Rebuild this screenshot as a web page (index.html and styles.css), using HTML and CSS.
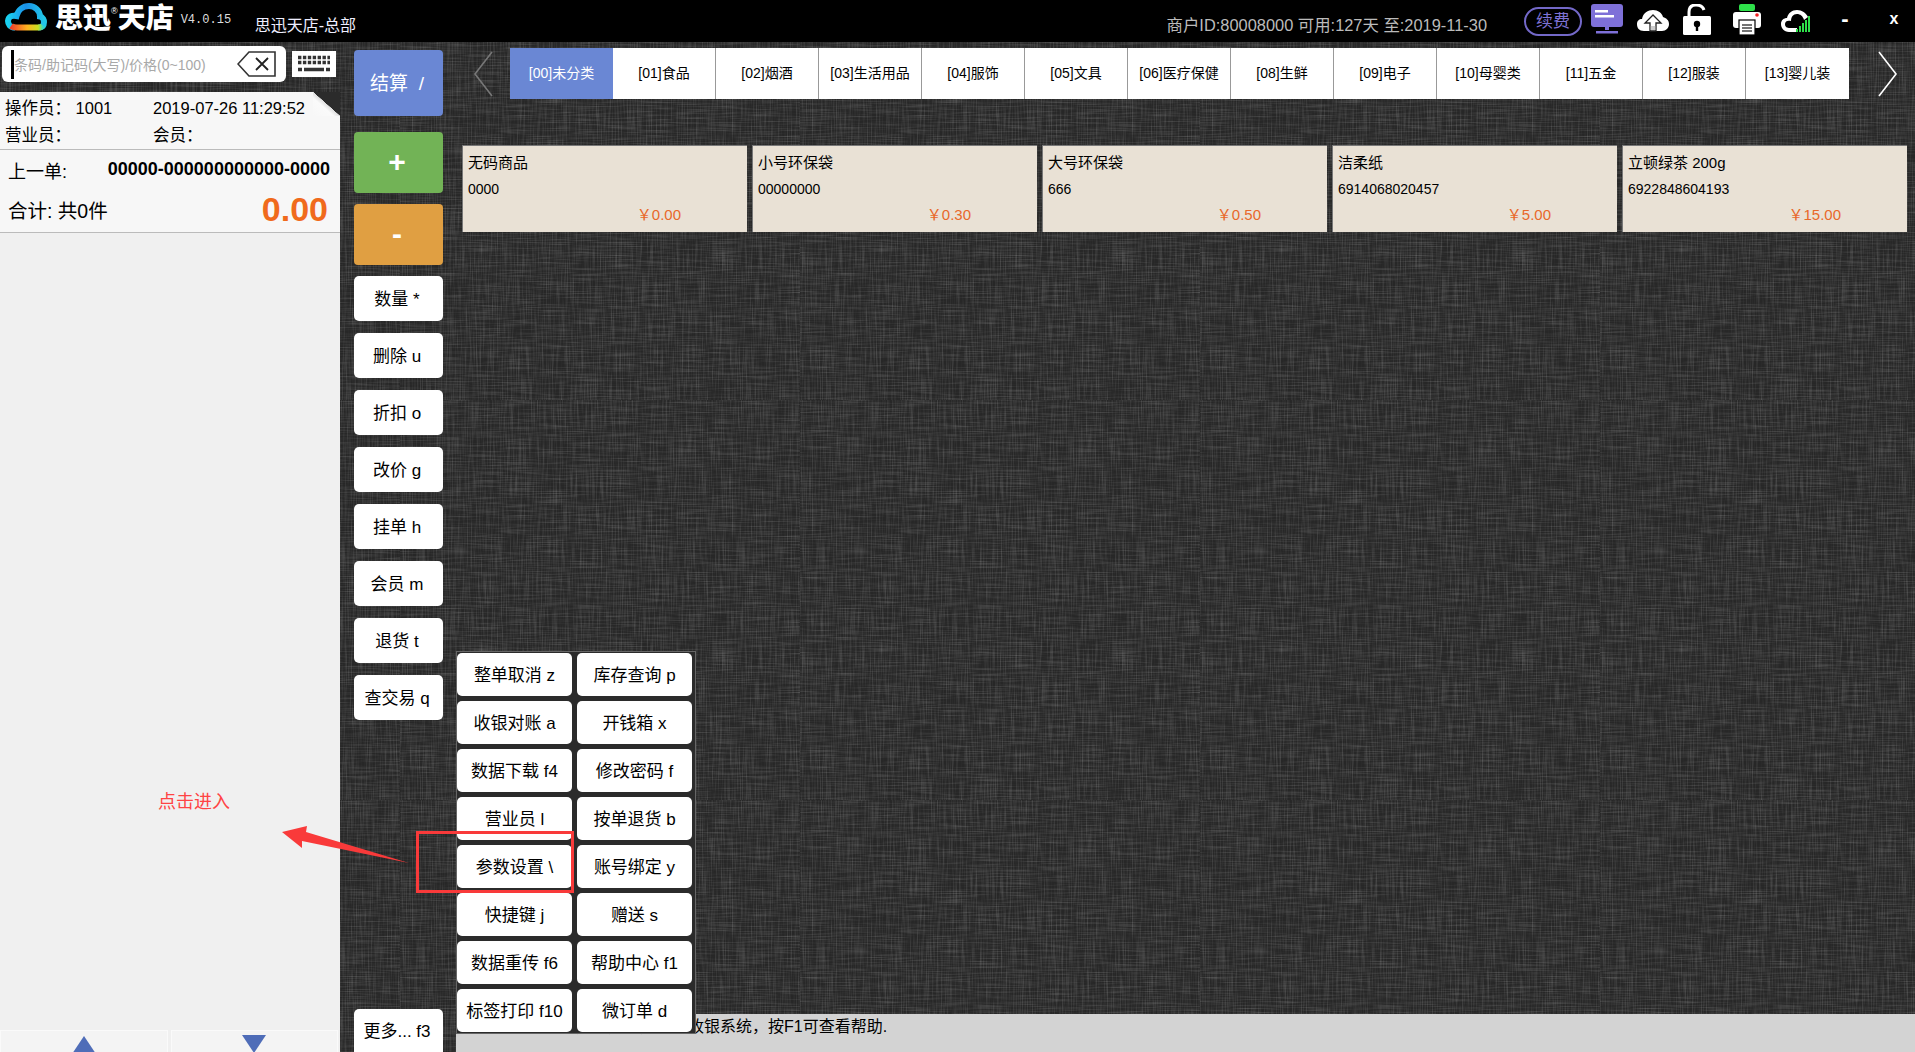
FILE: index.html
```html
<!DOCTYPE html>
<html lang="zh-CN">
<head>
    <meta charset="UTF-8">
    <meta name="viewport" content="width=device-width, initial-scale=1.0">
    <title>思迅天店</title>
    <link rel="stylesheet" href="styles.css">
</head>
<body>

<header class="topbar">
    <svg class="logo-cloud" viewBox="0 0 42 28" width="42" height="28">
        <defs>
            <linearGradient id="cloudTop" x1="0" y1="0" x2="1" y2="0">
                <stop offset="0" stop-color="#19d0f0"/>
                <stop offset="0.5" stop-color="#1a8fe8"/>
                <stop offset="1" stop-color="#22c8e8"/>
            </linearGradient>
            <linearGradient id="cloudBottom" x1="0" y1="0" x2="1" y2="0">
                <stop offset="0" stop-color="#f0402a"/>
                <stop offset="0.5" stop-color="#ffb21f"/>
                <stop offset="0.85" stop-color="#c8e020"/>
                <stop offset="1" stop-color="#30d8c8"/>
            </linearGradient>
        </defs>
        <path d="M10 24.5C5 24.5 3 21 3 18C3.5 13.5 7 12 11.5 13C13 7 18 3 24 3C30 3 35 8 35 13.5C38 14 39 17 39 19C39 23 37 24.5 33 24.5" fill="none" stroke="url(#cloudTop)" stroke-width="6"/>
        <path d="M6 23C8 24.5 10 24.5 12 24.5H33C35 24.5 37 24 38 22.5" fill="none" stroke="url(#cloudBottom)" stroke-width="6"/>
    </svg>
    <span class="logo-text">思迅<sup class="logo-reg">®</sup>天店</span>
    <span class="version">V4.0.15</span>
    <span class="shop-name">思迅天店-总部</span>

    <span class="merchant">商户ID:80008000 可用:127天 至:2019-11-30</span>
    <span class="renew">续费</span>

    <svg class="tool-icon icon-monitor" viewBox="0 0 32 30" width="32" height="30">
        <rect x="0" y="0" width="32" height="23" rx="3" fill="#7e70d8"/>
        <rect x="4" y="6" width="13" height="2.5" fill="#fff"/>
        <rect x="4" y="11" width="19" height="2.5" fill="#fff"/>
        <rect x="14" y="23" width="4" height="3" fill="#7e70d8"/>
        <rect x="5" y="27" width="22" height="2.5" fill="#7e70d8"/>
    </svg>
    <svg class="tool-icon icon-upload" viewBox="0 0 32 24" width="32" height="24">
        <path d="M7 22C2 22 0 19 0 15C0 12 2 10 5 10C6 4 11 1 16 1C21 1 25 4 26 8C29 9 32 11 32 15C32 19 29 22 25 22Z" fill="#fff"/>
        <path d="M16 6L8 14H13V22H19V14H24Z" fill="#fff" stroke="#222" stroke-width="1.3"/>
        <path d="M13 18H19M13 20H19" stroke="#999" stroke-width="1"/>
    </svg>
    <svg class="tool-icon icon-lock" viewBox="0 0 28 31" width="28" height="31">
        <path d="M6 14V8C6 3 9 1 13 1C17 1 20 3 21 6" fill="none" stroke="#fff" stroke-width="3"/>
        <rect x="0" y="12" width="28" height="19" rx="1.5" fill="#fff"/>
        <circle cx="14" cy="20" r="3.2" fill="#000"/>
        <rect x="12.8" y="21" width="2.4" height="6" fill="#000"/>
    </svg>
    <svg class="tool-icon icon-printer" viewBox="0 0 28 31" width="28" height="31">
        <rect x="6" y="0" width="16" height="7" rx="2" fill="#2ee04a"/>
        <rect x="0" y="8" width="28" height="16" rx="3" fill="#fff"/>
        <circle cx="24" cy="11" r="1.8" fill="#f02020"/>
        <rect x="6" y="16" width="16" height="15" fill="#fff" stroke="#000" stroke-width="1.2"/>
        <path d="M9 21H19M9 24H19M9 27H19" stroke="#444" stroke-width="1.6"/>
    </svg>
    <svg class="tool-icon icon-signal" viewBox="0 0 32 24" width="32" height="24">
        <path d="M16 23H8C3 23 0 19 0 15C0 11 3 9 6 9C7 4 11 1 16 1C21 1 25 4 27 8L23 11C22 7 19 5 16 5C12 5 10 8 10 12C7 11 4 12 4 15C4 18 6 19 9 19H16Z" fill="#fff"/>
        <path d="M16 23V20M19 23V17M22 23V14M25 23V11M28 23V7" stroke="#2ee04a" stroke-width="2"/>
    </svg>
    <span class="win-btn win-min">-</span>
    <span class="win-btn win-close">x</span>
</header>

<div class="main">
    <aside class="left-panel">
        <div class="search-row">
            <div class="search-box">
                <span class="caret"></span>
                <span class="placeholder">条码/助记码(大写)/价格(0~100)</span>
                <svg class="backspace" viewBox="0 0 40 26" width="40" height="26">
                    <path d="M12 1H38V25H12L1 13Z" fill="#fff" stroke="#333" stroke-width="1.6"/>
                    <path d="M19 7L31 19M31 7L19 19" stroke="#222" stroke-width="1.8"/>
                </svg>
            </div>
            <div class="keyboard">
                <svg viewBox="0 0 34 18" width="34" height="18">
                    <path d="M1 2.5H33M1 7.5H33" stroke="#333" stroke-width="3.4" stroke-dasharray="3.4 1.5"/>
                    <path d="M1 14.5H5M7 14.5H27M29 14.5H33" stroke="#333" stroke-width="3.6"/>
                </svg>
            </div>
        </div>

        <div class="paper">
            <div class="corner"></div>
            <div class="info-block">
                <div class="info-row">
                    <span class="info-a">操作员： 1001</span>
                    <span>2019-07-26 11:29:52</span>
                </div>
                <div class="info-row">
                    <span class="info-a">营业员：</span>
                    <span>会员：</span>
                </div>
            </div>
            <div class="total-block">
                <div class="last-order">
                    <span class="last-label">上一单:</span>
                    <b class="last-no">00000-000000000000-0000</b>
                </div>
                <div class="total-row">
                    <span class="total-label">合计: 共0件</span>
                    <b class="total-num">0.00</b>
                </div>
            </div>
            <div class="list-area"></div>
            <div class="pager">
                <div class="pager-btn"><span class="tri-up"></span></div>
                <div class="pager-btn"><span class="tri-down"></span></div>
            </div>
        </div>
    </aside>

    <nav class="action-col">
        <button class="act act-pay">结算&nbsp; /</button>
        <button class="act act-plus">+</button>
        <button class="act act-minus">-</button>
        <button class="act">数量 *</button>
        <button class="act">删除 u</button>
        <button class="act">折扣 o</button>
        <button class="act">改价 g</button>
        <button class="act">挂单 h</button>
        <button class="act">会员 m</button>
        <button class="act">退货 t</button>
        <button class="act">查交易 q</button>
        <button class="act act-more">更多... f3</button>
    </nav>

    <section class="content">
        <div class="cat-row">
            <svg class="cat-arrow" viewBox="0 0 20 48" width="20" height="48">
                <path d="M18 2L1 24L18 46" fill="none" stroke="#777" stroke-width="1.6"/>
            </svg>
            <div class="tabs">
                <div class="tab active">[00]未分类</div>
                <div class="tab">[01]食品</div>
                <div class="tab">[02]烟酒</div>
                <div class="tab">[03]生活用品</div>
                <div class="tab">[04]服饰</div>
                <div class="tab">[05]文具</div>
                <div class="tab">[06]医疗保健</div>
                <div class="tab">[08]生鲜</div>
                <div class="tab">[09]电子</div>
                <div class="tab">[10]母婴类</div>
                <div class="tab">[11]五金</div>
                <div class="tab">[12]服装</div>
                <div class="tab">[13]婴儿装</div>
            </div>
            <svg class="cat-arrow" viewBox="0 0 20 48" width="20" height="48">
                <path d="M1 2L18 24L1 46" fill="none" stroke="#fff" stroke-width="1.6"/>
            </svg>
        </div>

        <div class="cards">
            <div class="card">
                <div class="card-name">无码商品</div>
                <div class="card-code">0000</div>
                <div class="card-price">￥0.00</div>
            </div>
            <div class="card">
                <div class="card-name">小号环保袋</div>
                <div class="card-code">00000000</div>
                <div class="card-price">￥0.30</div>
            </div>
            <div class="card">
                <div class="card-name">大号环保袋</div>
                <div class="card-code">666</div>
                <div class="card-price">￥0.50</div>
            </div>
            <div class="card">
                <div class="card-name">洁柔纸</div>
                <div class="card-code">6914068020457</div>
                <div class="card-price">￥5.00</div>
            </div>
            <div class="card">
                <div class="card-name">立顿绿茶 200g</div>
                <div class="card-code">6922848604193</div>
                <div class="card-price">￥15.00</div>
            </div>
        </div>

        <div class="status-bar">欢迎使用思迅天店收银系统，按F1可查看帮助.</div>
    </section>
</div>

<!-- more menu, opened over the page -->
<div class="more-menu">
    <button class="more-btn">整单取消 z</button>
    <button class="more-btn">库存查询 p</button>
    <button class="more-btn">收银对账 a</button>
    <button class="more-btn">开钱箱 x</button>
    <button class="more-btn">数据下载 f4</button>
    <button class="more-btn">修改密码 f</button>
    <button class="more-btn">营业员 l</button>
    <button class="more-btn">按单退货 b</button>
    <button class="more-btn">参数设置 \</button>
    <button class="more-btn">账号绑定 y</button>
    <button class="more-btn">快捷键 j</button>
    <button class="more-btn">赠送 s</button>
    <button class="more-btn">数据重传 f6</button>
    <button class="more-btn">帮助中心 f1</button>
    <button class="more-btn">标签打印 f10</button>
    <button class="more-btn">微订单 d</button>
</div>

<!-- red annotation drawn on top of the screenshot -->
<div class="mark-box"></div>
<svg class="mark-arrow" viewBox="0 0 130 40" width="130" height="40">
    <path d="M0 7L25 1L24 7L127 38L20 16L20 23Z" fill="#f93a3a"/>
</svg>
<span class="mark-text">点击进入</span>

</body>
</html>
```

FILE: styles.css
```css
* {
    box-sizing: border-box;
}

html,
body {
    margin: 0;
    height: 100%;
    overflow: hidden;
}

body {
    position: relative;
    display: flex;
    flex-direction: column;
    font-family: "Liberation Sans", "Noto Sans CJK SC", sans-serif;
    color: #000;
    background-color: #272727;
    /* linen look, svg noise only */
    background-image: url("data:image/svg+xml,%3Csvg xmlns='http://www.w3.org/2000/svg' width='400' height='400'%3E%3Cfilter id='a'%3E%3CfeTurbulence type='fractalNoise' baseFrequency='0.03 0.8' numOctaves='2' stitchTiles='stitch'/%3E%3CfeColorMatrix values='0 0 0 0 1 0 0 0 0 1 0 0 0 0 1 0 0 0 0.3 -0.125'/%3E%3C/filter%3E%3Cfilter id='b'%3E%3CfeTurbulence type='fractalNoise' baseFrequency='0.8 0.03' numOctaves='2' stitchTiles='stitch'/%3E%3CfeColorMatrix values='0 0 0 0 1 0 0 0 0 1 0 0 0 0 1 0 0 0 0.3 -0.125'/%3E%3C/filter%3E%3Crect width='400' height='400' filter='url(%23a)'/%3E%3Crect width='400' height='400' filter='url(%23b)'/%3E%3C/svg%3E");
}

button {
    font-family: inherit;
    color: #000;
    border: none;
    padding: 0 0 2px;
}

/* top bar */
.topbar {
    height: 42px;
    flex: none;
    display: flex;
    align-items: center;
    background: #000;
    color: #fff;
    padding-left: 5px;
}

.logo-cloud {
    flex: none;
    margin-top: -8px;
}

.logo-text {
    margin-left: 8px;
    font-size: 28px;
    font-weight: 900;
    line-height: 30px;
    margin-top: -4px;
    white-space: nowrap;
}

.logo-reg {
    font-size: 9px;
    font-weight: 400;
    vertical-align: 14px;
    line-height: 0;
}

.version {
    margin-left: 7px;
    font-family: "Liberation Mono", monospace;
    font-size: 12px;
    color: #ddd;
    margin-top: -2px;
    width: 74px;
}

.shop-name {
    font-size: 16px;
    margin-top: 5px;
    color: #eef;
}

.merchant {
    margin-left: auto;
    font-size: 16.4px;
    color: #bbb;
    margin-top: 5px;
    white-space: nowrap;
}

.renew {
    margin-left: 37px;
    width: 58px;
    height: 29px;
    border: 2px solid #7368c8;
    border-radius: 15px;
    color: #7e72d4;
    font-size: 17px;
    line-height: 25px;
    text-align: center;
}

.tool-icon {
    flex: none;
}

.icon-monitor {
    margin-left: 9px;
    margin-top: -4px;
}

.icon-upload {
    margin-left: 14px;
}

.icon-lock {
    margin-left: 14px;
    margin-top: -4px;
}

.icon-printer {
    margin-left: 22px;
    margin-top: -3px;
}

.icon-signal {
    margin-left: 20px;
}

.win-btn {
    font-weight: 700;
    text-align: center;
    margin-top: -4px;
}

.win-min {
    margin-left: 28px;
    width: 8px;
    font-size: 22px;
}

.win-close {
    margin-left: 40px;
    margin-right: 16px;
    width: 10px;
    font-size: 16px;
}

/* layout */
.main {
    flex: 1;
    display: flex;
    min-height: 0;
}

/* left panel */
.left-panel {
    width: 340px;
    flex: none;
    display: flex;
    flex-direction: column;
}

.search-row {
    height: 50px;
    flex: none;
    display: flex;
    padding: 4px 0 0 2px;
}

.search-box {
    width: 284px;
    height: 36px;
    background: #fff;
    border-radius: 6px;
    display: flex;
    align-items: center;
    padding-left: 9px;
}

.caret {
    width: 3px;
    height: 29px;
    background: #000;
    flex: none;
}

.placeholder {
    font-size: 14px;
    color: #a8a8a8;
    white-space: nowrap;
    width: 223px;
    flex: none;
}

.backspace {
    flex: none;
}

.keyboard {
    margin: 5px 0 0 6px;
    width: 44px;
    height: 26px;
    background: #fff;
    display: flex;
    align-items: center;
    justify-content: center;
}

.paper {
    position: relative;
    flex: 1;
    display: flex;
    flex-direction: column;
    background: #f0f0f0;
    min-height: 0;
}

.corner {
    position: absolute;
    top: 0;
    right: 0;
    width: 27px;
    height: 24px;
    background: linear-gradient(to bottom left, #2b2b2b 0 49%, #dedede 50%, #fafafa 62%, #f7f7f7 100%);
}

.info-block {
    height: 58px;
    flex: none;
    padding: 3px 0 0 5px;
    background: #f7f7f7;
    border-bottom: 1px solid #bbb;
    font-size: 16.5px;
}

.info-row {
    display: flex;
    height: 27px;
    line-height: 27px;
}

.info-a {
    width: 148px;
    flex: none;
}

.total-block {
    height: 83px;
    flex: none;
    background: #f7f7f7;
    border-bottom: 1px solid #bbb;
    padding: 0 10px 0 8px;
}

.last-order {
    display: flex;
    align-items: center;
    justify-content: space-between;
    height: 39px;
}

.last-label {
    font-size: 18px;
}

.last-no {
    font-size: 18px;
}

.total-row {
    display: flex;
    align-items: center;
    justify-content: space-between;
    height: 41px;
}

.total-label {
    font-size: 19.5px;
}

.total-num {
    font-size: 34px;
    color: #f06a1c;
    margin-right: 2px;
}

.list-area {
    flex: 1;
}

.pager {
    height: 22px;
    flex: none;
    display: flex;
    gap: 3px;
    padding-right: 2px;
}

.pager-btn {
    flex: 1;
    display: flex;
    justify-content: center;
    padding-top: 5px;
    background: #f4f4f4;
    border: 1px solid #fafafa;
    border-bottom: none;
    overflow: hidden;
}

.tri-up {
    width: 0;
    height: 0;
    border-left: 12px solid transparent;
    border-right: 12px solid transparent;
    border-bottom: 18px solid #4f6db8;
}

.tri-down {
    width: 0;
    height: 0;
    margin-top: -1px;
    border-left: 12px solid transparent;
    border-right: 12px solid transparent;
    border-top: 18px solid #4f6db8;
}

/* middle buttons */
.action-col {
    width: 89px;
    flex: none;
    margin-left: 14px;
    padding-top: 8px;
    display: flex;
    flex-direction: column;
    gap: 12px;
}

.act {
    height: 45px;
    flex: none;
    padding-right: 3px;
    background: #fff;
    border-radius: 5px;
    font-size: 17px;
}

.act-pay {
    height: 66px;
    margin-bottom: 4px;
    background: #6a87d4;
    color: #fff;
    font-size: 19px;
    border-radius: 4px;
    padding-bottom: 4px;
}

.act-plus,
.act-minus {
    height: 61px;
    color: #fff;
    font-size: 30px;
    font-weight: 700;
    border-radius: 4px;
    margin-bottom: -1px;
}

.act-plus {
    background: #72b356;
}

.act-minus {
    background: #e09f42;
}

.act-more {
    margin-top: auto;
    height: 43px;
    border-radius: 5px 5px 0 0;
}

/* right side */
.content {
    flex: 1;
    min-width: 0;
    display: flex;
    flex-direction: column;
    padding-left: 13px;
}

.cat-row {
    display: flex;
    align-items: center;
    margin: 6px 0 0 7px;
    height: 51px;
    flex: none;
}

.cat-arrow {
    flex: none;
    margin-left: 11px;
}

.tabs {
    display: flex;
    margin-left: 16px;
    margin-right: 18px;
}

.tab {
    width: 103px;
    height: 51px;
    flex: none;
    background: #fff;
    border-right: 1px solid #999;
    font-size: 14px;
    line-height: 51px;
    text-align: center;
    white-space: nowrap;
}

.tab:last-child {
    border-right: none;
}

.tab.active {
    background: #6a87d4;
    color: #fff;
    border-right: none;
}

.cards {
    display: flex;
    gap: 5px;
    margin: 46px 0 0 6px;
}

.card {
    width: 285px;
    height: 87px;
    flex: none;
    padding: 6px 4px 0 5px;
    background: #e9e1d5;
    border-top: 1px solid #777;
    border-left: 1px solid #777;
}

.card-name {
    font-size: 15px;
    line-height: 22px;
}

.card-code {
    font-size: 14px;
    line-height: 16px;
    margin-top: 7px;
}

.card-price {
    font-size: 15px;
    color: #e8682a;
    text-align: right;
    padding-right: 62px;
    margin-top: 6px;
}

.status-bar {
    margin-top: auto;
    height: 38px;
    background: #d3d3d3;
    font-size: 16px;
    line-height: 26px;
    padding-left: 104px;
    white-space: nowrap;
}

/* popup menu */
.more-menu {
    position: absolute;
    left: 456px;
    top: 651px;
    width: 240px;
    height: 383px;
    padding: 1px 0 0;
    display: grid;
    grid-template-columns: 115px 115px;
    grid-auto-rows: 43px;
    gap: 5px;
    background: #2b2b2b;
    border: 1px solid #666;
}

.more-btn {
    background: #fff;
    border-radius: 5px;
    font-size: 17px;
    white-space: nowrap;
}

/* annotation */
.mark-box {
    position: absolute;
    left: 416px;
    top: 831px;
    width: 158px;
    height: 62px;
    border: 3px solid #f93a3a;
}

.mark-arrow {
    position: absolute;
    left: 282px;
    top: 825px;
}

.mark-text {
    position: absolute;
    left: 158px;
    top: 792px;
    font-size: 18px;
    line-height: 20px;
    color: #f44;
}
```
